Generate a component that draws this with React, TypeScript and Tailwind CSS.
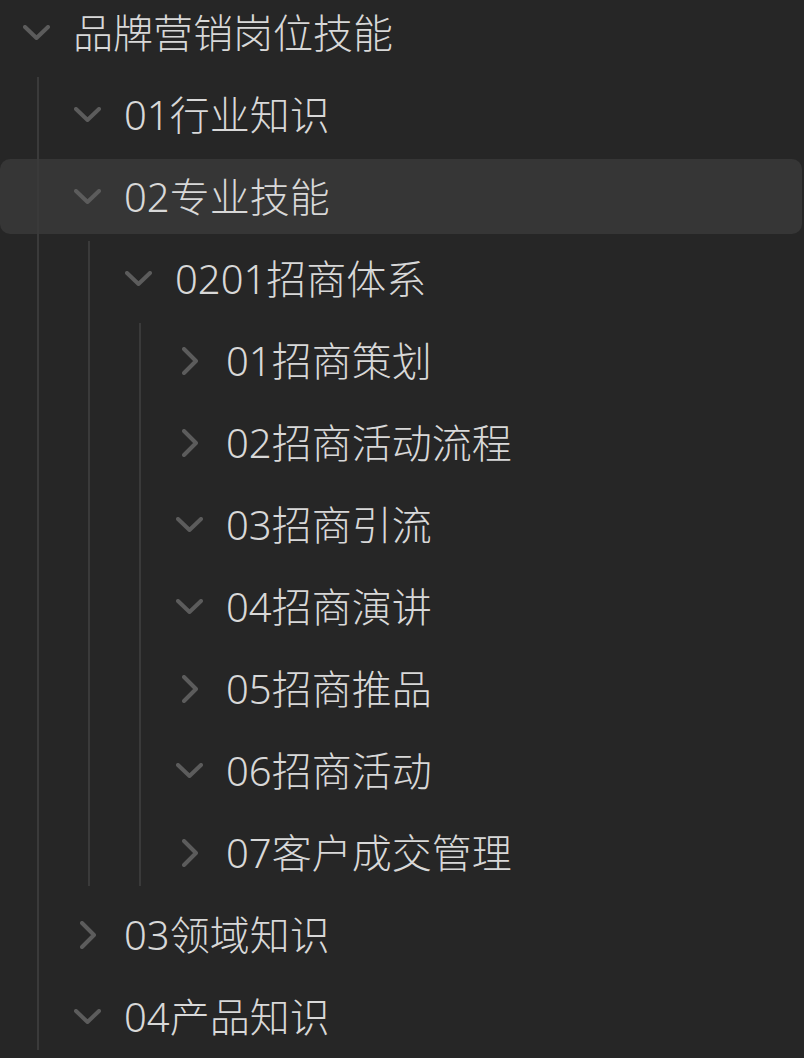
import React from "react";

type Node = { name: string; open: boolean; active?: boolean; children?: Node[] };

const tree: Node = {
  name: "品牌营销岗位技能",
  open: true,
  children: [
    { name: "01行业知识", open: true },
    {
      name: "02专业技能",
      open: true,
      active: true,
      children: [
        {
          name: "0201招商体系",
          open: true,
          children: [
            { name: "01招商策划", open: false },
            { name: "02招商活动流程", open: false },
            { name: "03招商引流", open: true },
            { name: "04招商演讲", open: true },
            { name: "05招商推品", open: false },
            { name: "06招商活动", open: true },
            { name: "07客户成交管理", open: false },
          ],
        },
      ],
    },
    { name: "03领域知识", open: false },
    { name: "04产品知识", open: true },
  ],
};

const padByLevel = ["pl-[23px]", "pl-[74px]", "pl-[125px]", "pl-[176px]"];
const lineByLevel = ["left-[37px]", "left-[88px]", "left-[139px]", "left-[190px]"];

function Chevron({ open }: { open: boolean }) {
  return (
    <div className="w-[27px] h-[28px] flex items-center justify-center shrink-0">
      {open ? (
        <svg width="27" height="15" viewBox="0 0 27 15" fill="none">
          <polyline points="2,2 13.5,13 25,2" stroke="#5c5c5c" strokeWidth="4" strokeLinecap="round" strokeLinejoin="round" />
        </svg>
      ) : (
        <svg width="16" height="28" viewBox="0 0 16 28" fill="none">
          <polyline points="2,2 14,14 2,26" stroke="#5c5c5c" strokeWidth="4" strokeLinecap="round" strokeLinejoin="round" />
        </svg>
      )}
    </div>
  );
}

function TreeNode({ node, level }: { node: Node; level: number }) {
  return (
    <div>
      <div
        className={`flex items-center h-[75px] mb-[7px] mr-[2px] rounded-[10px] ${padByLevel[level]} ${
          node.active ? "bg-[#363636]" : ""
        }`}
      >
        <Chevron open={node.open} />
        <span className="ml-[23px] mt-[1px] text-[40px] leading-none font-light text-[#d8d8d8] whitespace-nowrap">
          {node.name}
        </span>
      </div>
      {node.children && node.children.length > 0 && (
        <div className="relative">
          <div className={`absolute top-0 bottom-[4px] w-[2px] bg-[#3a3a3a] ${lineByLevel[level]}`} />
          {node.children.map((c) => (
            <TreeNode key={c.name} node={c} level={level + 1} />
          ))}
        </div>
      )}
    </div>
  );
}

export default function App() {
  return (
    <div
      className="w-[804px] h-[1058px] overflow-hidden bg-[#262626]"
      style={{ fontFamily: '"Noto Sans", "Noto Sans CJK SC", sans-serif' }}
    >
      <div className="-mt-[5px]">
        <TreeNode node={tree} level={0} />
      </div>
    </div>
  );
}
